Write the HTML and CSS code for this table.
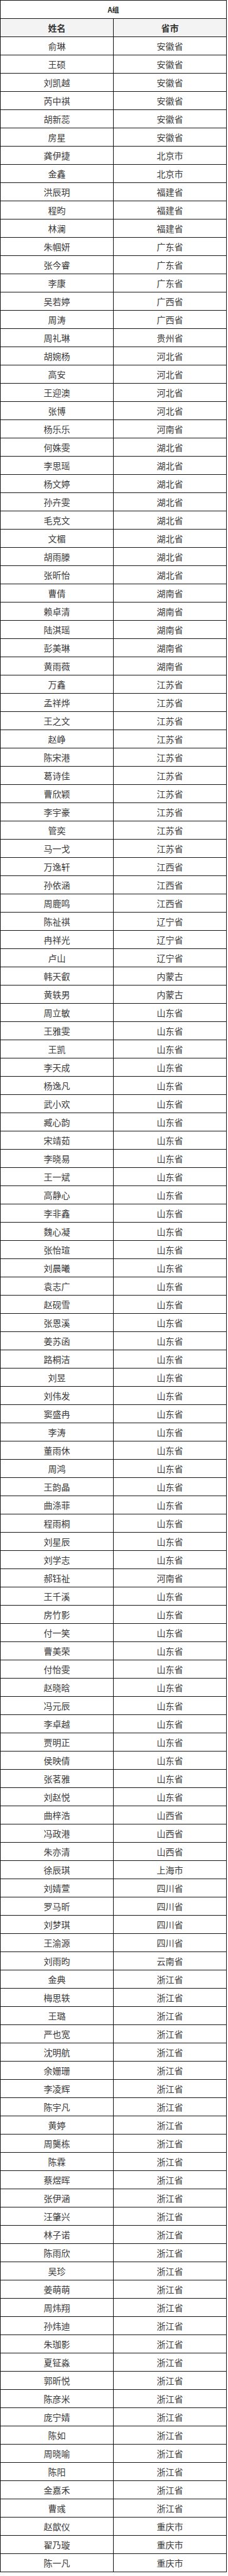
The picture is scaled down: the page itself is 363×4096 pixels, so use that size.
FILE: index.html
```html
<!DOCTYPE html>
<html lang="zh-CN">
<head>
<meta charset="utf-8">
<title>A组</title>
<link rel="stylesheet" href="styles.css">
</head>
<body>
<table class="roster">
<thead>
<tr><th colspan="2" class="group">A组</th></tr>
<tr class="head"><th>姓名</th><th>省市</th></tr>
</thead>
<tbody>
<tr><td>俞琳</td><td>安徽省</td></tr>
<tr><td>王硕</td><td>安徽省</td></tr>
<tr><td>刘凯越</td><td>安徽省</td></tr>
<tr><td>芮中祺</td><td>安徽省</td></tr>
<tr><td>胡新蕊</td><td>安徽省</td></tr>
<tr><td>房星</td><td>安徽省</td></tr>
<tr><td>龚伊捷</td><td>北京市</td></tr>
<tr><td>金鑫</td><td>北京市</td></tr>
<tr><td>洪辰玥</td><td>福建省</td></tr>
<tr><td>程昀</td><td>福建省</td></tr>
<tr><td>林澜</td><td>福建省</td></tr>
<tr><td>朱帼妍</td><td>广东省</td></tr>
<tr><td>张今睿</td><td>广东省</td></tr>
<tr><td>李康</td><td>广东省</td></tr>
<tr><td>吴若婷</td><td>广西省</td></tr>
<tr><td>周涛</td><td>广西省</td></tr>
<tr><td>周礼琳</td><td>贵州省</td></tr>
<tr><td>胡婉杨</td><td>河北省</td></tr>
<tr><td>高安</td><td>河北省</td></tr>
<tr><td>王迎澳</td><td>河北省</td></tr>
<tr><td>张博</td><td>河北省</td></tr>
<tr><td>杨乐乐</td><td>河南省</td></tr>
<tr><td>何姝雯</td><td>湖北省</td></tr>
<tr><td>李思瑶</td><td>湖北省</td></tr>
<tr><td>杨文婷</td><td>湖北省</td></tr>
<tr><td>孙卉雯</td><td>湖北省</td></tr>
<tr><td>毛克文</td><td>湖北省</td></tr>
<tr><td>文楣</td><td>湖北省</td></tr>
<tr><td>胡雨滕</td><td>湖北省</td></tr>
<tr><td>张昕怡</td><td>湖北省</td></tr>
<tr><td>曹倩</td><td>湖南省</td></tr>
<tr><td>赖卓清</td><td>湖南省</td></tr>
<tr><td>陆淇瑶</td><td>湖南省</td></tr>
<tr><td>彭美琳</td><td>湖南省</td></tr>
<tr><td>黄雨薇</td><td>湖南省</td></tr>
<tr><td>万鑫</td><td>江苏省</td></tr>
<tr><td>孟祥烨</td><td>江苏省</td></tr>
<tr><td>王之文</td><td>江苏省</td></tr>
<tr><td>赵峥</td><td>江苏省</td></tr>
<tr><td>陈宋港</td><td>江苏省</td></tr>
<tr><td>葛诗佳</td><td>江苏省</td></tr>
<tr><td>曹欣颖</td><td>江苏省</td></tr>
<tr><td>李宇豪</td><td>江苏省</td></tr>
<tr><td>管奕</td><td>江苏省</td></tr>
<tr><td>马一戈</td><td>江苏省</td></tr>
<tr><td>万逸轩</td><td>江西省</td></tr>
<tr><td>孙依涵</td><td>江西省</td></tr>
<tr><td>周鹿鸣</td><td>江西省</td></tr>
<tr><td>陈祉祺</td><td>辽宁省</td></tr>
<tr><td>冉祥光</td><td>辽宁省</td></tr>
<tr><td>卢山</td><td>辽宁省</td></tr>
<tr><td>韩天叡</td><td>内蒙古</td></tr>
<tr><td>黄轶男</td><td>内蒙古</td></tr>
<tr><td>周立敏</td><td>山东省</td></tr>
<tr><td>王雅雯</td><td>山东省</td></tr>
<tr><td>王凯</td><td>山东省</td></tr>
<tr><td>李天成</td><td>山东省</td></tr>
<tr><td>杨逸凡</td><td>山东省</td></tr>
<tr><td>武小欢</td><td>山东省</td></tr>
<tr><td>臧心韵</td><td>山东省</td></tr>
<tr><td>宋靖茹</td><td>山东省</td></tr>
<tr><td>李晓易</td><td>山东省</td></tr>
<tr><td>王一斌</td><td>山东省</td></tr>
<tr><td>高静心</td><td>山东省</td></tr>
<tr><td>李非鑫</td><td>山东省</td></tr>
<tr><td>魏心凝</td><td>山东省</td></tr>
<tr><td>张怡瑄</td><td>山东省</td></tr>
<tr><td>刘晨曦</td><td>山东省</td></tr>
<tr><td>袁志广</td><td>山东省</td></tr>
<tr><td>赵砚雪</td><td>山东省</td></tr>
<tr><td>张恩溪</td><td>山东省</td></tr>
<tr><td>姜苏函</td><td>山东省</td></tr>
<tr><td>路桐洁</td><td>山东省</td></tr>
<tr><td>刘昱</td><td>山东省</td></tr>
<tr><td>刘伟发</td><td>山东省</td></tr>
<tr><td>窦盛冉</td><td>山东省</td></tr>
<tr><td>李涛</td><td>山东省</td></tr>
<tr><td>董雨休</td><td>山东省</td></tr>
<tr><td>周鸿</td><td>山东省</td></tr>
<tr><td>王韵晶</td><td>山东省</td></tr>
<tr><td>曲涤菲</td><td>山东省</td></tr>
<tr><td>程雨桐</td><td>山东省</td></tr>
<tr><td>刘星辰</td><td>山东省</td></tr>
<tr><td>刘学志</td><td>山东省</td></tr>
<tr><td>郝钰祉</td><td>河南省</td></tr>
<tr><td>王千溪</td><td>山东省</td></tr>
<tr><td>房竹影</td><td>山东省</td></tr>
<tr><td>付一笑</td><td>山东省</td></tr>
<tr><td>曹美荣</td><td>山东省</td></tr>
<tr><td>付怡雯</td><td>山东省</td></tr>
<tr><td>赵晓晗</td><td>山东省</td></tr>
<tr><td>冯元辰</td><td>山东省</td></tr>
<tr><td>李卓越</td><td>山东省</td></tr>
<tr><td>贾明正</td><td>山东省</td></tr>
<tr><td>侯映倩</td><td>山东省</td></tr>
<tr><td>张茗雅</td><td>山东省</td></tr>
<tr><td>刘赵悦</td><td>山东省</td></tr>
<tr><td>曲梓浩</td><td>山西省</td></tr>
<tr><td>冯政港</td><td>山西省</td></tr>
<tr><td>朱亦清</td><td>山西省</td></tr>
<tr><td>徐辰琪</td><td>上海市</td></tr>
<tr><td>刘婧萱</td><td>四川省</td></tr>
<tr><td>罗马昕</td><td>四川省</td></tr>
<tr><td>刘梦琪</td><td>四川省</td></tr>
<tr><td>王渝源</td><td>四川省</td></tr>
<tr><td>刘雨昀</td><td>云南省</td></tr>
<tr><td>金典</td><td>浙江省</td></tr>
<tr><td>梅思轶</td><td>浙江省</td></tr>
<tr><td>王璐</td><td>浙江省</td></tr>
<tr><td>严也宽</td><td>浙江省</td></tr>
<tr><td>沈明航</td><td>浙江省</td></tr>
<tr><td>余姗珊</td><td>浙江省</td></tr>
<tr><td>李凌辉</td><td>浙江省</td></tr>
<tr><td>陈宇凡</td><td>浙江省</td></tr>
<tr><td>黄婷</td><td>浙江省</td></tr>
<tr><td>周龑栋</td><td>浙江省</td></tr>
<tr><td>陈霖</td><td>浙江省</td></tr>
<tr><td>蔡煜晖</td><td>浙江省</td></tr>
<tr><td>张伊涵</td><td>浙江省</td></tr>
<tr><td>汪肇兴</td><td>浙江省</td></tr>
<tr><td>林子诺</td><td>浙江省</td></tr>
<tr><td>陈雨欣</td><td>浙江省</td></tr>
<tr><td>吴珍</td><td>浙江省</td></tr>
<tr><td>姜萌萌</td><td>浙江省</td></tr>
<tr><td>周炜翔</td><td>浙江省</td></tr>
<tr><td>孙炜迪</td><td>浙江省</td></tr>
<tr><td>朱珈影</td><td>浙江省</td></tr>
<tr><td>夏钲淼</td><td>浙江省</td></tr>
<tr><td>郭昕悦</td><td>浙江省</td></tr>
<tr><td>陈彦米</td><td>浙江省</td></tr>
<tr><td>庞宁婧</td><td>浙江省</td></tr>
<tr><td>陈如</td><td>浙江省</td></tr>
<tr><td>周晓喻</td><td>浙江省</td></tr>
<tr><td>陈阳</td><td>浙江省</td></tr>
<tr><td>金嘉禾</td><td>浙江省</td></tr>
<tr><td>曹彧</td><td>浙江省</td></tr>
<tr><td>赵歆仪</td><td>重庆市</td></tr>
<tr><td>翟乃璇</td><td>重庆市</td></tr>
<tr><td>陈一凡</td><td>重庆市</td></tr>
</tbody>
</table>
</body>
</html>
```

FILE: styles.css
```css
html,
body {
  margin: 0;
  padding: 0;
  background: #ffffff;
}

.roster {
  width: 361px;
  table-layout: fixed;
  border-collapse: separate;
  border-spacing: 0;
  border-top: 1px solid #141414;
  border-left: 1px solid #141414;
  font-family: "Noto Sans CJK SC", "Noto Sans", sans-serif;
  color: #3a3a3a;
}

.roster th,
.roster td {
  padding: 0;
  line-height: 28px;
  border-right: 1px solid #141414;
  border-bottom: 1px solid #141414;
  text-align: center;
  font-size: 14px;
  font-weight: 400;
}

.roster .group {
  font-size: 11px;
  font-weight: 700;
  color: #222222;
  background: #ffffff;
}

.roster .head th {
  background: #f3f3f3;
  font-weight: 700;
  color: #333333;
}
```
